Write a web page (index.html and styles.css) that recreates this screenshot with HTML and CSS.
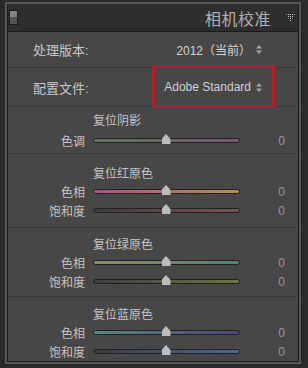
FILE: index.html
```html
<!DOCTYPE html>
<html lang="zh">
<head>
    <meta charset="UTF-8">
    <title>相机校准</title>
    <link rel="stylesheet" href="styles.css">
</head>
<body>
    <div class="panel">
        <div class="panel-head">
            <span class="toggle"></span>
            <span class="panel-title">相机校准</span>
            <svg class="collapse" width="9" height="8" viewBox="0 0 9 8">
                <defs>
                    <pattern id="dots" width="2" height="2" patternUnits="userSpaceOnUse">
                        <rect width="1" height="1" fill="#c4c4c4"/>
                    </pattern>
                </defs>
                <polygon points="0,0 9,0 4.5,8" fill="url(#dots)"/>
            </svg>
        </div>

        <div class="panel-body">
            <div class="row row-version">
                <span class="row-label">处理版本:</span>
                <span class="select">2012（当前）
                    <svg class="updown" width="6" height="9" viewBox="0 0 6 9"><polygon points="0,3.5 3,0 6,3.5"/><polygon points="0,5.5 3,9 6,5.5"/></svg>
                </span>
            </div>

            <div class="row row-profile">
                <span class="row-label">配置文件:</span>
                <span class="select">Adobe Standard
                    <svg class="updown" width="6" height="9" viewBox="0 0 6 9"><polygon points="0,3.5 3,0 6,3.5"/><polygon points="0,5.5 3,9 6,5.5"/></svg>
                </span>
                <span class="highlight"></span>
            </div>

            <div class="group group-shadow">
                <div class="group-title">复位阴影</div>
                <div class="slider">
                    <span class="slider-label">色调</span>
                    <div class="track track-tint"><span class="thumb"></span></div>
                    <span class="slider-value">0</span>
                </div>
            </div>

            <div class="group group-red">
                <div class="group-title">复位红原色</div>
                <div class="slider">
                    <span class="slider-label">色相</span>
                    <div class="track track-red-hue"><span class="thumb"></span></div>
                    <span class="slider-value">0</span>
                </div>
                <div class="slider">
                    <span class="slider-label">饱和度</span>
                    <div class="track track-red-sat"><span class="thumb"></span></div>
                    <span class="slider-value">0</span>
                </div>
            </div>

            <div class="group group-green">
                <div class="group-title">复位绿原色</div>
                <div class="slider">
                    <span class="slider-label">色相</span>
                    <div class="track track-green-hue"><span class="thumb"></span></div>
                    <span class="slider-value">0</span>
                </div>
                <div class="slider">
                    <span class="slider-label">饱和度</span>
                    <div class="track track-green-sat"><span class="thumb"></span></div>
                    <span class="slider-value">0</span>
                </div>
            </div>

            <div class="group group-blue">
                <div class="group-title">复位蓝原色</div>
                <div class="slider">
                    <span class="slider-label">色相</span>
                    <div class="track track-blue-hue"><span class="thumb"></span></div>
                    <span class="slider-value">0</span>
                </div>
                <div class="slider">
                    <span class="slider-label">饱和度</span>
                    <div class="track track-blue-sat"><span class="thumb"></span></div>
                    <span class="slider-value">0</span>
                </div>
            </div>
        </div>
    </div>
</body>
</html>
```

FILE: styles.css
```css
* {
    box-sizing: border-box;
    margin: 0;
    padding: 0;
}

body {
    background: #2a2a2a;
    font-family: "Liberation Sans", "Noto Sans CJK SC", sans-serif;
    color: #c8c8c8;
}

.panel {
    margin: 2px 7px 0 5px;
    border: 2px solid #575757;
}

/* header strip */
.panel-head {
    display: flex;
    align-items: center;
    height: 28px;
    padding: 0 3px 0 1px;
    background: #2e2e2e;
    border: 1px solid #1a1a1a;
    border-top: 0;
}

.toggle {
    width: 9px;
    height: 15px;
    border: 1px solid #1c1c1c;
    background: linear-gradient(to bottom, #858585 0, #858585 45%, #555 45%, #555 100%);
}

.panel-title {
    margin-left: auto;
    font-family: "Noto Sans CJK SC", sans-serif;
    font-size: 16px;
    color: #b0b0b0;
    letter-spacing: 0.5px;
}

.collapse {
    margin-left: 15px;
}

/* body */
.panel-body {
    background: #474747;
    border: 1px solid #1a1a1a;
    border-top: 0;
}

.row {
    display: flex;
    align-items: center;
    justify-content: space-between;
    padding: 0 36px 0 25px;
    font-size: 13px;
    color: #c6c6c6;
}

.row-version {
    height: 35px;
}

.row-profile {
    position: relative;
    height: 39px;
    border-top: 1px solid #3a3a3a;
}

.select {
    display: flex;
    align-items: center;
    gap: 5px;
    font-size: 12px;
    color: #d2d2d2;
}

.updown {
    fill: #a4a4a4;
}

/* red annotation box */
.highlight {
    position: absolute;
    left: 144px;
    top: -3px;
    width: 123px;
    height: 43px;
    border: 3px solid #a8232e;
}

.group {
    border-top: 1px solid #3a3a3a;
}

.group-shadow { height: 47px; padding-top: 4px; }
.group-shadow .group-title { margin-bottom: 2px; }
.group-red { height: 74px; padding-top: 10px; }
.group-green { height: 69px; padding-top: 7px; }
.group-blue { height: 65px; padding-top: 8px; }

.group-title {
    height: 18px;
    line-height: 18px;
    padding-left: 85px;
    font-family: "Noto Sans CJK SC", sans-serif;
    font-size: 12px;
    color: #c4c4c4;
}

.slider {
    display: grid;
    grid-template-columns: 77px 147px 1fr;
    column-gap: 8px;
    align-items: center;
    height: 19px;
}

.slider-label {
    text-align: right;
    font-family: "Noto Sans CJK SC", sans-serif;
    font-size: 12px;
    color: #c4c4c4;
}

.slider-value {
    text-align: right;
    padding-right: 13px;
    font-size: 12px;
    color: #969696;
}

.track {
    position: relative;
    height: 5px;
    border: 1px solid #222;
    border-radius: 3px;
}

.thumb {
    position: absolute;
    left: calc(50% - 5px);
    top: -5px;
    width: 9px;
    height: 10px;
    background: #bdbdbd;
    clip-path: polygon(50% 0, 100% 50%, 100% 100%, 0 100%, 0 50%);
}

.track-tint { background: linear-gradient(to right, #557a57, #7c5474); }
.track-red-hue { background: linear-gradient(to right, #a25a80, #a89060); }
.track-red-sat { background: linear-gradient(to right, #3c3c3c, #84504e); }
.track-green-hue { background: linear-gradient(to right, #8e8c56, #448a6c); }
.track-green-sat { background: linear-gradient(to right, #3c3c3c, #6a7648); }
.track-blue-hue { background: linear-gradient(to right, #4c8e82, #4c4284); }
.track-blue-sat { background: linear-gradient(to right, #3c3c3c, #4e6a84); }
```
